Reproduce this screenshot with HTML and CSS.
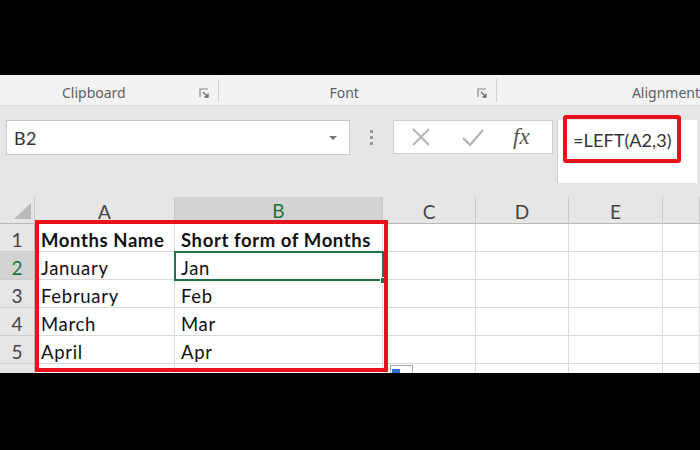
FILE: index.html
```html
<!DOCTYPE html>
<html>
<head>
<meta charset="utf-8">
<link rel="stylesheet" href="styles.css">
</head>
<body>
<div class="page">
  <div class="blackbar top"></div>
  <div class="ribbon">
    <div class="group g-clip">
      <span class="glabel">Clipboard</span>
      <svg class="launcher" width="10" height="10" viewBox="0 0 10 10"><path d="M1 9V1h8" fill="none" stroke="#8a8a8a" stroke-width="1.2"/><path d="M4 4l4.5 4.5M5.5 9H9V5.5" fill="none" stroke="#666" stroke-width="1.3"/></svg>
    </div>
    <div class="sep"></div>
    <div class="group g-font">
      <span class="glabel">Font</span>
      <svg class="launcher" width="10" height="10" viewBox="0 0 10 10"><path d="M1 9V1h8" fill="none" stroke="#8a8a8a" stroke-width="1.2"/><path d="M4 4l4.5 4.5M5.5 9H9V5.5" fill="none" stroke="#666" stroke-width="1.3"/></svg>
    </div>
    <div class="sep"></div>
    <div class="group g-align">
      <span class="glabel">Alignment</span>
    </div>
  </div>
  <div class="fbar">
    <div class="namebox">
      <span class="nbtext">B2</span>
      <span class="nbarrow"></span>
    </div>
    <div class="dots"><i></i><i></i><i></i></div>
    <div class="btns">
      <svg class="ico-x" width="22" height="22" viewBox="0 0 22 22"><path d="M3 3l16 16M19 3L3 19" stroke="#b4b4b4" stroke-width="2" fill="none"/></svg>
      <svg class="ico-check" width="24" height="20" viewBox="0 0 24 20"><path d="M2 11l7 7L22 3" stroke="#b4b4b4" stroke-width="2.2" fill="none"/></svg>
      <span class="fx">fx</span>
    </div>
    <div class="formula">
      <span class="ftext">=LEFT(A2,3)</span>
      <div class="fhl"></div>
    </div>
  </div>
  <div class="sheet">
    <div class="grid">
      <div class="corner"><span class="tri"></span></div>
      <div class="ch">A</div>
      <div class="ch sel">B</div>
      <div class="ch">C</div>
      <div class="ch">D</div>
      <div class="ch">E</div>
      <div class="ch"></div>

      <div class="rh">1</div>
      <div class="c b">Months Name</div>
      <div class="c b">Short form of Months</div>
      <div class="c"></div><div class="c"></div><div class="c"></div><div class="c"></div>

      <div class="rh sel">2</div>
      <div class="c">January</div>
      <div class="c">Jan</div>
      <div class="c"></div><div class="c"></div><div class="c"></div><div class="c"></div>

      <div class="rh">3</div>
      <div class="c">February</div>
      <div class="c">Feb</div>
      <div class="c"></div><div class="c"></div><div class="c"></div><div class="c"></div>

      <div class="rh">4</div>
      <div class="c">March</div>
      <div class="c">Mar</div>
      <div class="c"></div><div class="c"></div><div class="c"></div><div class="c"></div>

      <div class="rh">5</div>
      <div class="c">April</div>
      <div class="c">Apr</div>
      <div class="c"></div><div class="c"></div><div class="c"></div><div class="c"></div>

      <div class="rh rh6">6</div>
      <div class="c"></div><div class="c"></div><div class="c"></div><div class="c"></div><div class="c"></div><div class="c"></div>
    </div>
    <div class="selbox"><span class="handle"></span></div>
    <div class="hlbox"></div>
    <div class="paste"><span class="pblue"></span></div>
  </div>
  <div class="blackbar bottom"></div>
</div>
</body>
</html>
```
FILE: styles.css
```css
* { box-sizing: border-box; }
html, body { margin: 0; padding: 0; background: #000; }
.page {
  width: 700px;
  height: 450px;
  overflow: hidden;
  background: #000;
  font-family: "Lato", "Open Sans", sans-serif;
}
.blackbar.top { height: 75px; background: #000; }
.blackbar.bottom { height: 77px; background: #000; }

/* ribbon group labels */
.ribbon {
  height: 31px;
  background: #f3f3f3;
  border-bottom: 1px solid #dcdcdc;
  display: flex;
  align-items: center;
  font-family: "Noto Sans", "Open Sans", sans-serif;
  font-size: 14px;
  color: #5f5f5f;
  white-space: nowrap;
  overflow: hidden;
  padding-top: 5px;
}
.group { display: flex; align-items: center; height: 100%; }
.g-clip { width: 219px; padding-left: 62px; }
.g-font { width: 277px; padding-left: 110px; }
.g-align { flex: 1; padding-left: 135px; }
.launcher { margin-left: auto; margin-right: 9px; margin-top: 1px; }
.sep { width: 1px; height: 23px; background: #d2d2d2; margin-top: -4px; }

/* formula bar */
.fbar {
  height: 91px;
  background: #e6e6e6;
  display: flex;
  align-items: flex-start;
  padding-top: 14px;
}
.namebox {
  margin-left: 6px;
  width: 344px;
  height: 35px;
  background: #fff;
  border: 1px solid #c8c8c8;
  display: flex;
  align-items: center;
  padding-left: 7px;
  padding-right: 12px;
}
.nbtext { font-size: 18px; color: #333; letter-spacing: 0.4px; }
.nbarrow {
  margin-left: auto;
  width: 0; height: 0;
  border-left: 4px solid transparent;
  border-right: 4px solid transparent;
  border-top: 4px solid #777;
}
.dots {
  width: 43px;
  height: 35px;
  display: flex;
  flex-direction: column;
  align-items: center;
  justify-content: center;
  gap: 3px;
}
.dots i { display: block; width: 3px; height: 3px; background: #999; }
.btns {
  width: 160px;
  height: 34px;
  background: #fff;
  border: 1px solid #cfcfcf;
  display: flex;
  align-items: center;
  padding-left: 16px;
}
.ico-x { margin-right: 29px; }
.ico-check { margin-right: 28px; }
.fx {
  font-family: "Liberation Serif", "DejaVu Serif", serif;
  font-style: italic;
  font-size: 23px;
  color: #555;
}
.formula {
  position: relative;
  margin-left: 4px;
  width: 140px;
  height: 63px;
  background: #fff;
  border-left: 1px solid #d0d0d0;
  padding-left: 15px;
  padding-top: 9px;
}
.ftext {
  font-size: 18px;
  color: #333;
  letter-spacing: 0.1px;
}
.fhl {
  position: absolute;
  left: 5px;
  top: -5px;
  width: 118px;
  height: 48px;
  border: 4px solid #e8121a;
  border-radius: 3px;
}

/* sheet */
.sheet {
  position: relative;
  height: 176px;
  background: #fff;
  overflow: hidden;
}
.grid {
  display: grid;
  grid-template-columns: 35px 140px 208px 93px 93px 94px 37px;
  grid-template-rows: 27px repeat(6, 28px);
}
.corner {
  background: #e6e6e6;
  border-right: 1px solid #c8c8c8;
  border-bottom: 1px solid #b8b8b8;
  position: relative;
}
.tri {
  position: absolute;
  right: 3px;
  bottom: 4px;
  width: 0; height: 0;
  border-left: 17px solid transparent;
  border-bottom: 16px solid #b9b9b9;
}
.ch {
  background: #e6e6e6;
  border-right: 1px solid #c8c8c8;
  border-bottom: 1px solid #b8b8b8;
  display: flex;
  align-items: center;
  justify-content: center;
  font-size: 19px;
  color: #444;
  padding-top: 2px;
}
.ch.sel { background: #d3d3d3; color: #217346; border-bottom: 2px solid #217346; }
.rh {
  background: #e6e6e6;
  border-right: 1px solid #b8b8b8;
  border-bottom: 1px solid #cdcdcd;
  display: flex;
  align-items: center;
  justify-content: center;
  font-size: 19px;
  color: #444;
  padding-top: 3px;
}
.rh.sel { background: #d3d3d3; color: #217346; }
.rh6 { align-items: flex-start; padding-top: 5px; }
.c {
  border-right: 1px solid #dadada;
  border-bottom: 1px solid #dadada;
  display: flex;
  align-items: center;
  padding-left: 6px;
  font-size: 18.5px;
  letter-spacing: 0.7px;
  color: #111;
  white-space: nowrap;
  overflow: hidden;
  padding-top: 4px;
}
.c.b { font-weight: 700; letter-spacing: 0.6px; }

.selbox {
  position: absolute;
  left: 174px;
  top: 54px;
  width: 210px;
  height: 30px;
  border: 2px solid #217346;
}
.handle {
  position: absolute;
  right: -5px;
  bottom: -5px;
  width: 7px;
  height: 7px;
  background: #217346;
  border: 1px solid #fff;
}
.hlbox {
  position: absolute;
  left: 35px;
  top: 23px;
  width: 353px;
  height: 152px;
  border: 4px solid #e8121a;
}
.paste {
  position: absolute;
  left: 390px;
  top: 168px;
  width: 23px;
  height: 12px;
  border: 1px solid #a8a8a8;
  background: #fff;
}
.pblue {
  position: absolute;
  left: 1px;
  top: 3px;
  width: 8px;
  height: 6px;
  background: #2b6fd6;
}
```
